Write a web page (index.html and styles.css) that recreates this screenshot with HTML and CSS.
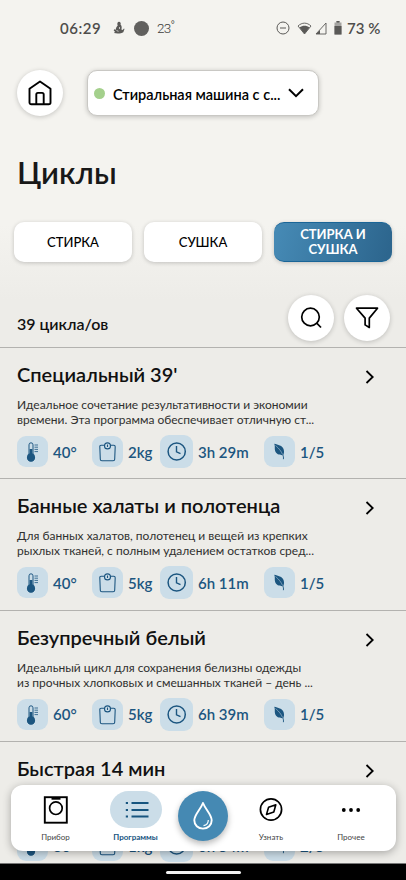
FILE: index.html
```html
<!DOCTYPE html>
<html lang="ru">
<head>
<meta charset="utf-8">
<meta name="viewport" content="width=device-width, initial-scale=1">
<title>Циклы</title>
<link rel="stylesheet" href="styles.css">
</head>
<body>
<svg class="defs" aria-hidden="true">
  <symbol id="thermo" viewBox="0 0 31 31">
    <path d="M12 18V8.8a2 2 0 0 1 4 0V18" fill="none" stroke="currentColor" stroke-width="1"/>
    <path d="M12.6 13h2.8v5.5a3.8 3.8 0 1 1-2.8 0z" fill="currentColor"/>
    <circle cx="14" cy="21.3" r="4" fill="currentColor"/>
    <path d="M17.5 9h3.5M17.5 11.2h3.5M17.5 13.4h3.5M17.5 15.6h3.5" stroke="currentColor" stroke-width=".8"/>
  </symbol>
  <symbol id="scale" viewBox="0 0 31 31">
    <path d="M12.3 9.3H9.2c-1 0-1.5.6-1.4 1.5l.5 12.4c0 1 .7 1.6 1.6 1.6h11.2c.9 0 1.6-.6 1.6-1.6l.5-12.4c0-.9-.5-1.5-1.4-1.5h-3.100" fill="none" stroke="currentColor" stroke-width="1.1"/>
    <circle cx="15.500" cy="9.900" r="3" fill="none" stroke="currentColor" stroke-width="1.100"/>
    <path d="M15.500 8.500v2.500" stroke="currentColor" stroke-width="1.100"/>
  </symbol>
  <symbol id="clock" viewBox="0 0 33 33">
    <circle cx="16.700" cy="16.500" r="8.600" fill="none" stroke="currentColor" stroke-width="1.500"/>
    <path d="M16.500 11v5.800l4 1.900" fill="none" stroke="currentColor" stroke-width="1.400"/>
  </symbol>
  <symbol id="leaf" viewBox="0 0 31 31">
    <path d="M10.300 7.800c3.500 1 8.200 1.500 9.400 5.700.7 2.500.2 4.300-.5 5.700-3.200.2-7.200-.7-8.200-4.600-.5-2.200.2-4.400-.7-6.800z" fill="currentColor"/>
    <path d="M11.500 9.500c3.500 3 7.500 7 8 13.500" fill="none" stroke="#cbdde8" stroke-width=".5"/>
    <path d="M18.600 18.500c.9 1.600 1 3 .8 4.700" fill="none" stroke="currentColor" stroke-width=".9"/>
  </symbol>
  <symbol id="chevron" viewBox="0 0 10 14">
    <path d="M1.500 1l6.200 6-6.200 6" fill="none" stroke="currentColor" stroke-width="1.800"/>
  </symbol>
</svg>
<div class="app">
  <header class="status">
    <span class="time">06:29</span>
    <svg class="figure" viewBox="0 0 12 14"><path d="M6 .8a1.700 1.700 0 0 1 1.500 2.600c1.300 1.200 1.500 3 .9 5l1.200.7 1.400-1.700.5.500-1.200 3.300C8.500 12.500 4 12.800 1 12l1-1.200L.7 9.500l.5-1.200 1.600.5C2.800 7 3.500 5.500 4.700 4.400 3.800 3 4.500.8 6 .8z" fill="currentColor"/><path d="M3.500 9.500l2 .8M6.500 6v2" stroke="#f4f3ef" stroke-width=".7"/></svg>
    <span class="moon"></span>
    <span class="temp">23<sup>°</sup></span>
    <svg class="dnd" viewBox="0 0 14 14"><circle cx="7" cy="7" r="6" fill="none" stroke="currentColor"/><path d="M4 7h6" stroke="currentColor"/></svg>
    <svg class="wifi" viewBox="0 0 15 13"><path d="M1 4C5 .2 10 .2 14 4L7.500 12z" fill="none" stroke="currentColor" stroke-width=".9"/><path d="M2.500 5.500c3-2.400 7-2.400 10 0l-5 6.500z" fill="currentColor"/></svg>
    <svg class="signal" viewBox="0 0 12 13"><path d="M11 1v11H1z" fill="none" stroke="currentColor" stroke-width=".9"/><path d="M5 8v4H1z" fill="currentColor"/></svg>
    <svg class="battery" viewBox="0 0 8 14"><path d="M2.500 0h3v1.500h2V13.500h-7V1.500h2z" fill="#a5a4a1"/><path d="M2.500 0h3v1.500h-3zM.5 5h7v8.500h-7z" fill="currentColor"/></svg>
    <span class="level">73 %</span>
  </header>

  <div class="device-bar">
    <button class="round" aria-label="Домой"><svg width="24" height="26" viewBox="0 0 24 26"><path d="M1.500 8.700L12 1.500l10.500 7.200v13.800c0 1-.7 1.800-1.800 1.800H3.300c-1 0-1.800-.8-1.800-1.800z" fill="none" stroke="#000" stroke-width="1.900" stroke-linejoin="round"/><path d="M8.300 24V14.500c0-1 .6-1.600 1.600-1.600h4.200c1 0 1.600.6 1.600 1.600V24" fill="none" stroke="#000" stroke-width="1.900"/></svg></button>
    <button class="picker">
      <span class="dot"></span>
      <span class="picker-name">Стиральная машина с с...</span>
      <svg width="16" height="10" viewBox="0 0 16 10"><path d="M1 1.300l7 6.900 7-6.900" fill="none" stroke="#000" stroke-width="2"/></svg>
    </button>
  </div>

  <h1>Циклы</h1>

  <nav class="modes">
    <button class="mode">СТИРКА</button>
    <button class="mode">СУШКА</button>
    <button class="mode selected">СТИРКА И<br>СУШКА</button>
  </nav>

  <div class="summary">
    <span class="count">39 цикла/ов</span>
    <button class="round" aria-label="Поиск"><svg width="24" height="24" viewBox="0 0 24 24"><circle cx="11.500" cy="11" r="8.800" fill="none" stroke="#000" stroke-width="1.700"/><path d="M17.700 17.200l4.300 4.300" stroke="#000" stroke-width="1.700"/></svg></button>
    <button class="round" aria-label="Фильтр"><svg width="24" height="24" viewBox="0 0 24 24"><path d="M1.500 2.200h21l-8.200 9.900V21.500l-4.200-2.600V12.100z" fill="none" stroke="#000" stroke-width="1.700" stroke-linejoin="round"/></svg></button>
  </div>

  <main class="cycles">
    <article class="cycle">
      <h2 class="t1">Специальный 39'</h2><svg class="more"><use href="#chevron"/></svg>
      <p>Идеальное сочетание результативности и экономии<br>времени. Эта программа обеспечивает отличную ст...</p>
      <ul><li><svg class="chip"><use href="#thermo"/></svg>40°</li><li><svg class="chip"><use href="#scale"/></svg>2kg</li><li><svg class="chip large"><use href="#clock"/></svg>3h 29m</li><li><svg class="chip"><use href="#leaf"/></svg>1/5</li></ul>
    </article>
    <article class="cycle">
      <h2 class="t2">Банные халаты и полотенца</h2><svg class="more"><use href="#chevron"/></svg>
      <p>Для банных халатов, полотенец и вещей из крепких<br>рыхлых тканей, с полным удалением остатков сред...</p>
      <ul><li><svg class="chip"><use href="#thermo"/></svg>40°</li><li><svg class="chip"><use href="#scale"/></svg>5kg</li><li><svg class="chip large"><use href="#clock"/></svg>6h 11m</li><li><svg class="chip"><use href="#leaf"/></svg>1/5</li></ul>
    </article>
    <article class="cycle">
      <h2 class="t3">Безупречный белый</h2><svg class="more"><use href="#chevron"/></svg>
      <p>Идеальный цикл для сохранения белизны одежды<br>из прочных хлопковых и смешанных тканей – день ...</p>
      <ul><li><svg class="chip"><use href="#thermo"/></svg>60°</li><li><svg class="chip"><use href="#scale"/></svg>5kg</li><li><svg class="chip large"><use href="#clock"/></svg>6h 39m</li><li><svg class="chip"><use href="#leaf"/></svg>1/5</li></ul>
    </article>
    <article class="cycle">
      <h2 class="t4">Быстрая 14 мин</h2><svg class="more"><use href="#chevron"/></svg>
      <p><br><br></p>
      <ul><li><svg class="chip"><use href="#thermo"/></svg>30°</li><li><svg class="chip"><use href="#scale"/></svg>1kg</li><li><svg class="chip large"><use href="#clock"/></svg>0h 54m</li><li><svg class="chip"><use href="#leaf"/></svg>2/5</li></ul>
    </article>
  </main>

  <nav class="tabbar">
    <a class="tab"><svg width="46" height="37" viewBox="0 0 46 37"><rect x="11.800" y="6.200" width="22" height="25.500" fill="none" stroke="#000" stroke-width="1.900"/><circle cx="22.900" cy="17.200" r="6.300" fill="none" stroke="#000" stroke-width="1.700"/><path d="M18.500 7.800h9" stroke="#000" stroke-width="1.800"/></svg><span>Прибор</span></a>
    <a class="tab active"><svg class="pill" width="52" height="37" viewBox="0 0 52 37"><path d="M21.500 12h17M21.500 19h17M21.500 25.500h17" stroke="currentColor" stroke-width="1.900"/><path d="M15.800 12h2.200M15.800 19h2.200M15.800 25.500h2.200" stroke="currentColor" stroke-width="2.200"/></svg><span>Программы</span></a>
    <a class="drop" aria-label="Капля"><svg width="22" height="30" viewBox="0 0 22 30"><path d="M11 2C8.500 8.500 2.300 13.500 2.300 19.300c0 4.800 3.700 8.300 8.700 8.300s8.700-3.500 8.700-8.300C19.700 13.500 13.500 8.500 11 2z" fill="none" stroke="#fff" stroke-width="1.900" stroke-linejoin="round"/><path d="M16.300 19c0 3.200-1.800 5.200-4.800 5.600" fill="none" stroke="#fff" stroke-width="1.200"/></svg></a>
    <a class="tab"><svg width="46" height="37" viewBox="0 0 46 37"><circle cx="23" cy="18.500" r="10.600" fill="none" stroke="#000" stroke-width="1.700"/><path d="M27.800 13.700l-2 7.300-7.300 2.400 2.100-7.200z" fill="none" stroke="#000" stroke-width="1.600" stroke-linejoin="round"/></svg><span>Узнать</span></a>
    <a class="tab"><svg width="46" height="37" viewBox="0 0 46 37"><g fill="#000"><circle cx="15.800" cy="19" r="1.900"/><circle cx="23" cy="19" r="1.900"/><circle cx="30.200" cy="19" r="1.900"/></g></svg><span>Прочее</span></a>
  </nav>
  <div class="system"><span></span></div>
</div>
</body>
</html>
```
FILE: styles.css
```css
* { box-sizing: border-box; margin: 0; padding: 0; }
body { background: #edece8; font-family: Lato, "Noto Sans", sans-serif; color: #111; }
button { border: 0; background: #fff; font: inherit; color: #000; }
svg { display: block; flex: none; }
.defs { position: absolute; width: 0; height: 0; }
.app {
  position: relative; width: 406px; height: 880px; overflow: hidden;
  display: flex; flex-direction: column;
  background: linear-gradient(#f4f3ef 0, #f4f3ef 225px, #edece8 300px);
}

.status { display: flex; align-items: center; height: 56px; flex: none; padding: 0 27px 0 60px; color: #5a5957; }
.time { width: 53px; font-size: 15px; font-weight: 600; letter-spacing: .55px; color: #4e4d4b; }
.figure { width: 12px; height: 14px; }
.moon { width: 15px; height: 15px; margin-left: 9px; border-radius: 50%; background: #61605e; }
.temp { margin-left: 8px; font: 300 13.500px/16px Roboto, sans-serif; letter-spacing: -.8px; color: #3f3e3c; }
.temp sup { font-size: 12px; line-height: 0; vertical-align: 3px; }
.dnd { width: 14px; height: 14px; margin-left: auto; }
.wifi { width: 15px; height: 13px; margin-left: 7px; }
.signal { width: 12px; height: 13px; margin-left: 3px; }
.battery { width: 8px; height: 14px; margin-left: 7px; }
.level { width: 32px; margin-left: 5px; white-space: nowrap; font-size: 15px; font-weight: 600; color: #4e4d4b; }

.round {
  display: grid; place-items: center; flex: none; width: 46px; height: 46px; border-radius: 50%;
  box-shadow: 0 1px 5px rgba(0, 0, 0, .2);
}
.device-bar { display: flex; gap: 24px; flex: none; height: 62px; padding: 14px 0 0 17px; }
.picker {
  display: flex; align-items: center; width: 232px; height: 46px; padding: 0 14px 0 6px; border-radius: 10px;
  border: 1px solid #c9c8c4; box-shadow: 0 1px 5px rgba(0, 0, 0, .22);
}
.dot { width: 11px; height: 11px; flex: none; border-radius: 50%; background: #a4d08c; }
.picker-name { width: 177px; margin: 2px 0 0 8px; text-align: left; white-space: nowrap; font-size: 14.500px; font-weight: 600; }

h1 { flex: none; height: 104px; padding: 35px 0 0 17px; font-size: 31px; line-height: 38px; font-weight: 600; color: #181818; }

.modes { display: flex; flex: none; gap: 12px; height: 41px; padding-left: 14px; }
.mode {
  width: 118px; height: 40px; border-radius: 10px; font-size: 13px; line-height: 15px; font-weight: 500;
  box-shadow: 0 1px 4px rgba(0, 0, 0, .2);
}
.mode.selected { color: #fff; font-weight: 700; background: linear-gradient(105deg, #4589b4 5%, #2d668e 95%); border-top: 1px solid #1a6597; border-bottom: 1px solid #1a6597; }

.summary { display: flex; flex: none; gap: 10px; height: 84px; padding: 32px 16px 0 17px; }
.count { flex: 1; margin-top: 19px; font-size: 16px; line-height: 20px; font-weight: 600; }

.cycles { flex: none; }
.cycle {
  display: grid; grid-template: 41px 34px 1fr / 1fr 10px; height: 131.400px;
  padding: 0 31px 0 17px; border-top: 1px solid #b3b2af;
}
h2 { padding-top: 14px; font-size: 20px; line-height: 25px; font-weight: 600; white-space: nowrap; }
.more { width: 10px; height: 14px; margin-top: 22px; color: #000; }
.cycle p { grid-column: 1 / -1; padding-top: 8px; font-size: 12px; line-height: 15px; font-weight: 400; white-space: nowrap; color: #30302f; }
.cycle ul { grid-column: 1 / -1; display: grid; grid-template-columns: 75px 68px 104px auto; align-items: center; height: 33px; margin-top: 12px; list-style: none; color: #1c5680; }
.cycle li { display: flex; align-items: center; gap: 5px; font-size: 15px; font-weight: 600; white-space: nowrap; }
.chip { width: 31px; height: 31px; border-radius: 9px; background: #cbdde8; }
.chip.large { width: 33px; height: 33px; }

.tabbar {
  position: absolute; left: 11px; top: 785px; width: 385px; height: 66px; border-radius: 12px;
  display: grid; grid-template-columns: 89px 71px 65px 70px 90px; background: #fff;
  box-shadow: 0 2px 8px rgba(0, 0, 0, .3);
}
.tab { display: flex; flex-direction: column; align-items: center; padding-top: 6px; font-size: 8px; line-height: 10px; color: #444; }
.tab span { margin-top: 4px; }
.tab.active { color: #17557f; font-weight: 700; }
.pill { border-radius: 19px; background: #cbdde8; }
.drop {
  display: grid; place-items: center; width: 50px; height: 50px; margin: 6px 0 0 7px; border-radius: 50%;
  background: #4589b3; box-shadow: 0 3px 6px rgba(0, 0, 0, .28);
}
.system { position: absolute; left: 0; bottom: 0; width: 406px; height: 17px; display: flex; justify-content: center; background: #000; border-top: 1px solid #777; }
.system span { width: 75px; height: 3px; margin-top: 7px; border-radius: 2px; background: #f2f2f2; }
```
